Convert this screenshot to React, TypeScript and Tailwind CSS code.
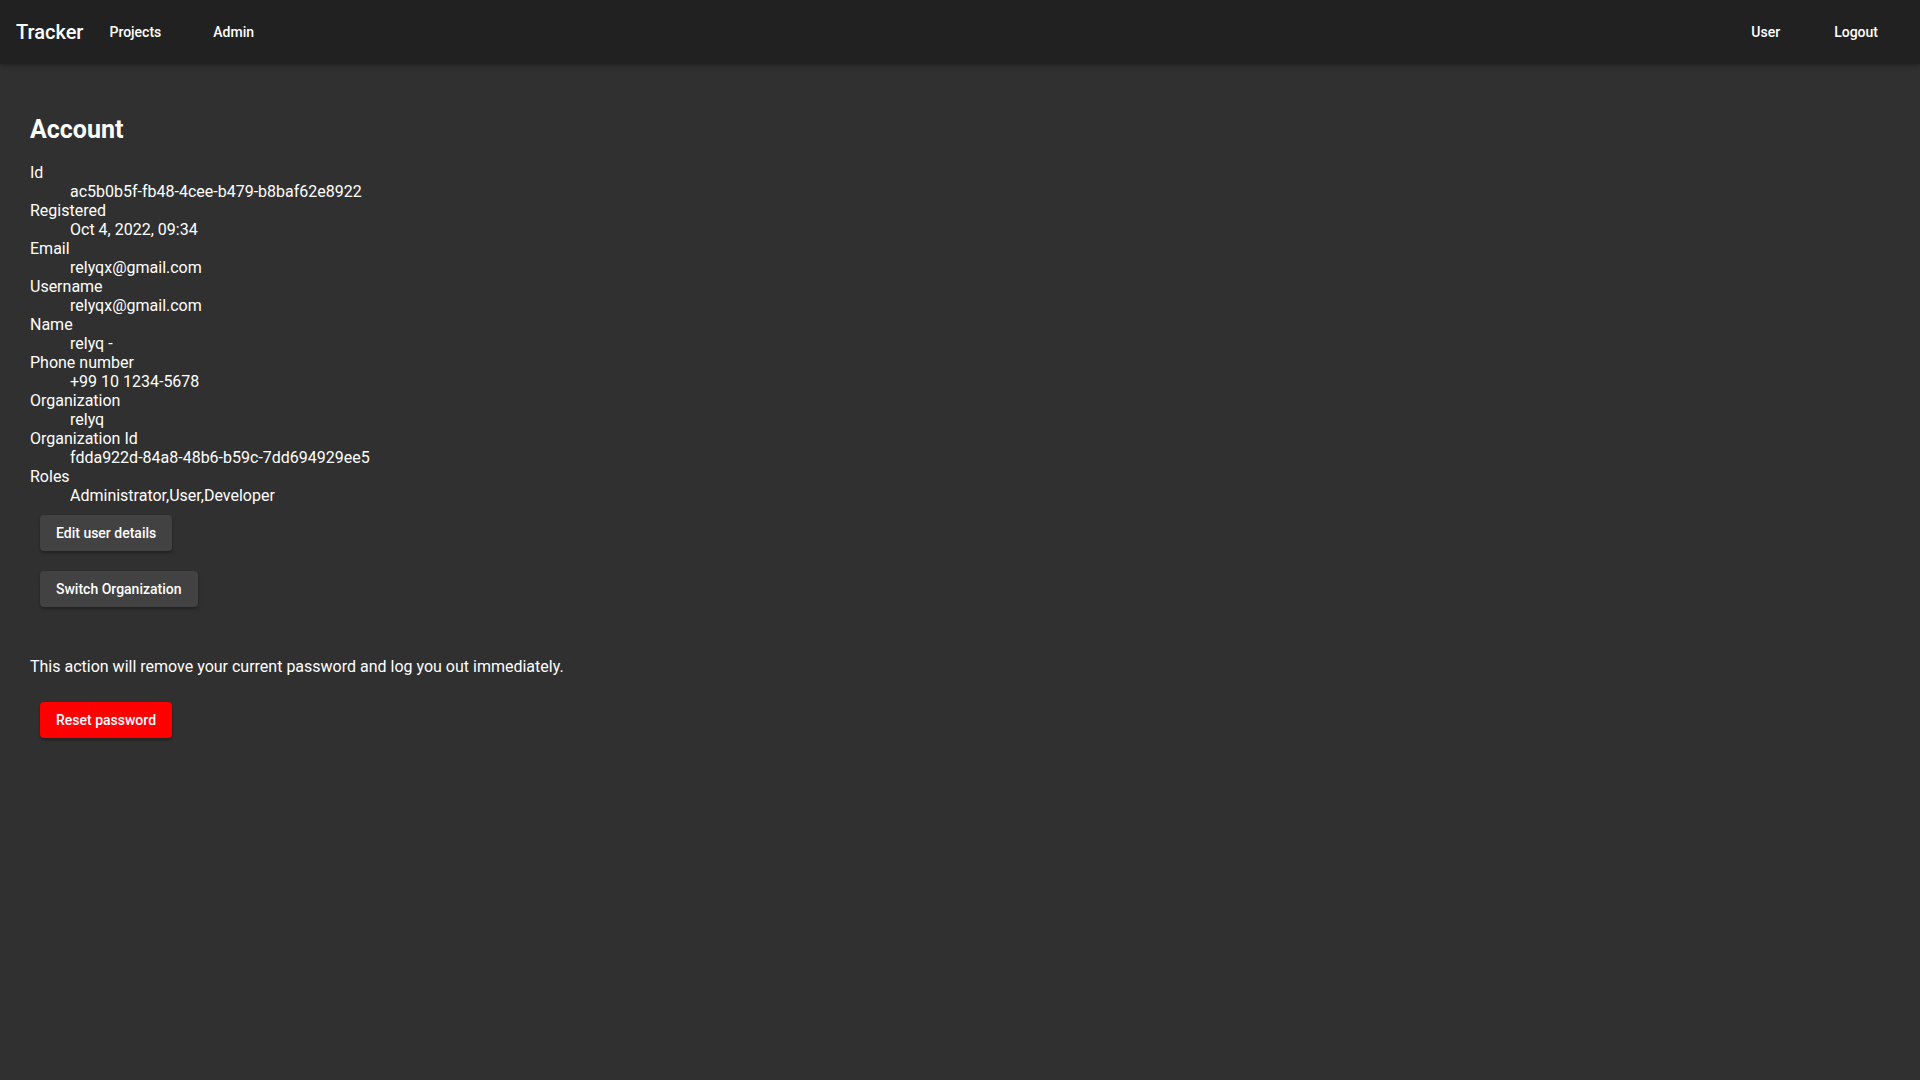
import React from 'react';

const fields: [string, string][] = [
    ['Id', 'ac5b0b5f-fb48-4cee-b479-b8baf62e8922'],
    ['Registered', 'Oct 4, 2022, 09:34'],
    ['Email', 'relyqx@gmail.com'],
    ['Username', 'relyqx@gmail.com'],
    ['Name', 'relyq -'],
    ['Phone number', '+99 10 1234-5678'],
    ['Organization', 'relyq'],
    ['Organization Id', 'fdda922d-84a8-48b6-b59c-7dd694929ee5'],
    ['Roles', 'Administrator,User,Developer'],
];

const NavButton: React.FC<{ label: string }> = ({ label }) => (
    <button type="button" className="h-full px-[26px] text-[14px] font-medium text-white">
        {label}
    </button>
);

export default function App() {
    return (
        <div className="min-h-screen bg-[#303030] text-white font-['Roboto','Liberation_Sans',sans-serif]">
            <header className="flex items-center justify-between h-[64px] bg-[#212121] shadow-[0_2px_4px_rgba(0,0,0,0.25)]">
                <div className="flex items-center h-full">
                    <span className="pl-[16px] text-[20px] font-medium leading-none">Tracker</span>
                    <NavButton label="Projects" />
                    <NavButton label="Admin" />
                </div>
                <div className="flex items-center h-full pr-[16px]">
                    <NavButton label="User" />
                    <div className="ml-[2px]">
                        <NavButton label="Logout" />
                    </div>
                </div>
            </header>

            <main className="px-[30px] pt-[52px]">
                <h2 className="text-[25px] font-bold leading-[28px]">Account</h2>

                <dl className="mt-[19px] text-[16px] leading-[19px]">
                    {fields.map(([label, value]) => (
                        <React.Fragment key={label}>
                            <dt>{label}</dt>
                            <dd className="ml-[40px]">{value}</dd>
                        </React.Fragment>
                    ))}
                </dl>

                <div className="flex flex-col items-start gap-[20px] mt-[10px] ml-[10px]">
                    <button
                        type="button"
                        className="h-[36px] px-[16px] text-[14px] font-medium bg-[#424242] rounded-[4px] shadow-[0_2px_3px_rgba(0,0,0,0.3)]"
                    >
                        Edit user details
                    </button>
                    <button
                        type="button"
                        className="h-[36px] px-[16px] text-[14px] font-medium bg-[#424242] rounded-[4px] shadow-[0_2px_3px_rgba(0,0,0,0.3)]"
                    >
                        Switch Organization
                    </button>
                </div>

                <p className="mt-[50px] text-[16px] leading-[19px]">
                    This action will remove your current password and log you out immediately.
                </p>

                <button
                    type="button"
                    className="mt-[26px] ml-[10px] h-[36px] px-[16px] text-[14px] font-medium bg-[#ff0000] rounded-[4px] shadow-[0_2px_3px_rgba(0,0,0,0.3)]"
                >
                    Reset password
                </button>
            </main>
        </div>
    );
}
